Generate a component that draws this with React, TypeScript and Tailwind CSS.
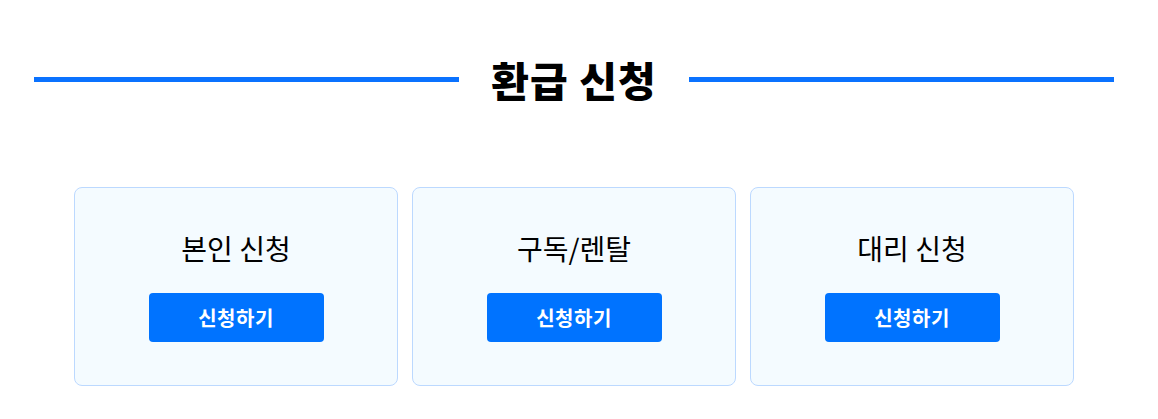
import React from "react";

const cards = ["본인 신청", "구독/렌탈", "대리 신청"];

export default function App() {
  return (
    <div
      className="w-[1158px] h-[419px] bg-white"
      style={{ fontFamily: '"Noto Sans CJK KR", "Noto Sans", sans-serif' }}
    >
      <div className="ml-[34px] w-[1080px] pt-[49px]">
        <div className="flex items-center h-[60px]">
          <div className="flex-1 h-[5px] bg-[#0a72ff]" />
          <h2 className="px-8 text-[41px] font-black leading-none tracking-[1px] text-black">환급 신청</h2>
          <div className="flex-1 h-[5px] bg-[#0a72ff]" />
        </div>
        <div className="mt-[78px] flex justify-center gap-[14px]">
          {cards.map((c) => (
            <div
              key={c}
              className="w-[324px] h-[199px] rounded-lg border border-[#bcd9ff] bg-[#f4fbff] flex flex-col items-center pt-[40px]"
            >
              <div className="text-[28px] leading-[40px] text-black">{c}</div>
              <button className="mt-[25px] w-[175px] h-[49px] rounded bg-[#0073ff] text-white text-[20px] font-bold tracking-[0.5px]">
                신청하기
              </button>
            </div>
          ))}
        </div>
      </div>
    </div>
  );
}
